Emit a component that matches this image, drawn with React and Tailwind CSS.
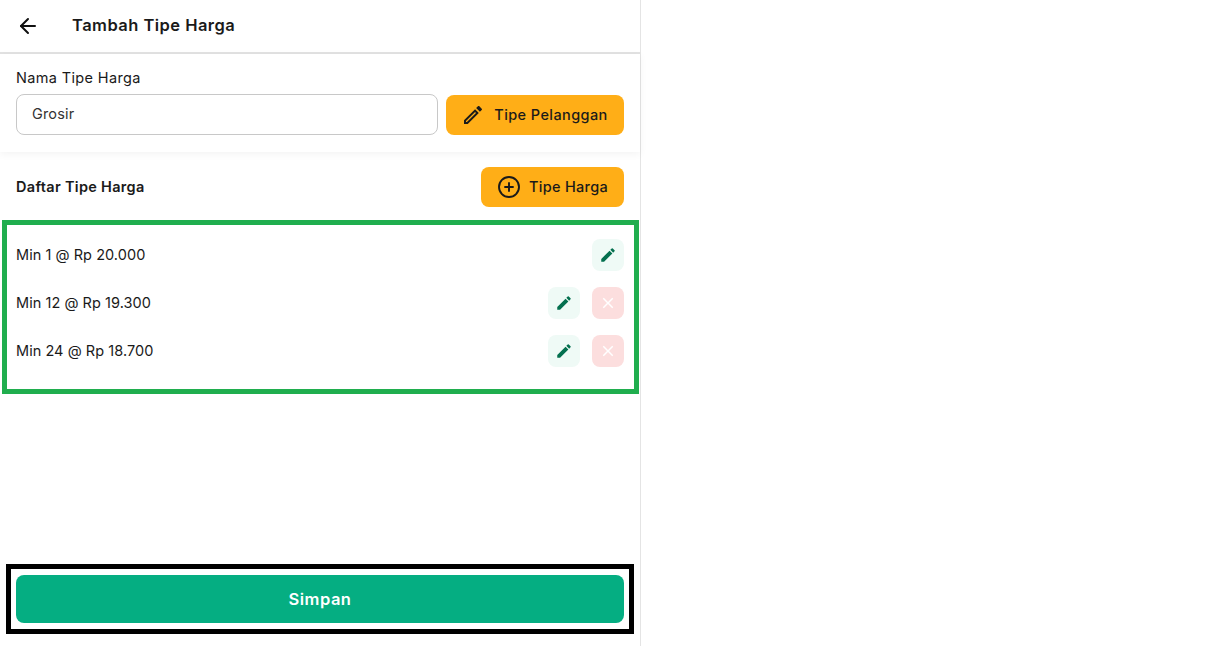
import React from "react";
import { ArrowLeft, CirclePlus } from "lucide-react";
import { MdEdit, MdOutlineEdit, MdClose } from "react-icons/md";

const rows = [
  { text: "Min 1 @ Rp 20.000", del: false },
  { text: "Min 12 @ Rp 19.300", del: true },
  { text: "Min 24 @ Rp 18.700", del: true },
];

export default function App() {
  return (
    <div className="flex h-[646px] w-[1205px] overflow-hidden bg-white font-['Inter','Liberation_Sans',sans-serif] text-[#1a1a1a]">
      <div className="flex h-full w-[641px] flex-col border-r border-[#e4e4e4]">
        <header className="flex h-[54px] shrink-0 items-center border-b-2 border-[#e2e2e2] pl-[16px]">
          <ArrowLeft className="size-[24px] text-[#111]" strokeWidth={2} />
          <h1 className="ml-[32px] pb-[2px] text-[16.5px] font-semibold tracking-[0.46px]">Tambah Tipe Harga</h1>
        </header>

        <section className="h-[98px] shrink-0 px-4 pt-[15px] shadow-[0_2px_8px_rgba(0,0,0,0.05)]">
          <p className="h-[25px] text-[14.5px] leading-[18px] tracking-[0.35px]">Nama Tipe Harga</p>
          <div className="flex items-center gap-2">
            <div className="flex h-[41px] w-[422px] items-center rounded-lg border border-[#c8c8c8] pb-[2px] pl-[15px] text-[14.5px] tracking-[0.15px] text-[#333]">Grosir</div>
            <button className="flex h-[40px] w-[178px] items-center justify-center gap-[9px] rounded-lg bg-[#ffae17] pr-[1px] text-[14.5px] font-medium tracking-[0.4px]">
              <MdOutlineEdit className="size-[24px]" />
              Tipe Pelanggan
            </button>
          </div>
        </section>

        <div className="flex shrink-0 items-center justify-between px-4 pt-[15px]">
          <h2 className="text-[14.5px] font-semibold tracking-[0.3px]">Daftar Tipe Harga</h2>
          <button className="flex h-[40px] w-[143px] items-center justify-center gap-[8px] rounded-lg bg-[#ffae17] text-[14.5px] font-medium tracking-[0.3px]">
            <CirclePlus className="size-[24px]" strokeWidth={1.9} />
            Tipe Harga
          </button>
        </div>

        <div className="ml-[2px] mr-[1px] mt-[13px] flex h-[174px] shrink-0 flex-col gap-4 border-[5px] border-[#20ae4e] pb-0 pl-[9px] pr-[10px] pt-[14px]">
          {rows.map((r) => (
            <div key={r.text} className="flex h-8 items-center justify-between">
              <span className="text-[14.5px] tracking-[0.05px]">{r.text}</span>
              <div className="flex gap-3">
                <button className="flex size-8 items-center justify-center rounded-lg bg-[#effaf6]">
                  <MdEdit className="size-[18px] text-[#04704f]" />
                </button>
                {r.del && (
                  <button className="flex size-8 items-center justify-center rounded-lg bg-[#fcdede]">
                    <MdClose className="size-[18px] text-white" />
                  </button>
                )}
              </div>
            </div>
          ))}
        </div>

        <div className="ml-[6px] mt-auto mb-3 h-[70px] w-[628px] shrink-0 border-[5px] border-black px-[5px] pt-[6px]">
          <button className="flex h-[48px] w-full items-center justify-center rounded-lg bg-[#05ae82] text-[16.5px] font-semibold tracking-[0.5px] text-white">
            Simpan
          </button>
        </div>
      </div>
    </div>
  );
}
